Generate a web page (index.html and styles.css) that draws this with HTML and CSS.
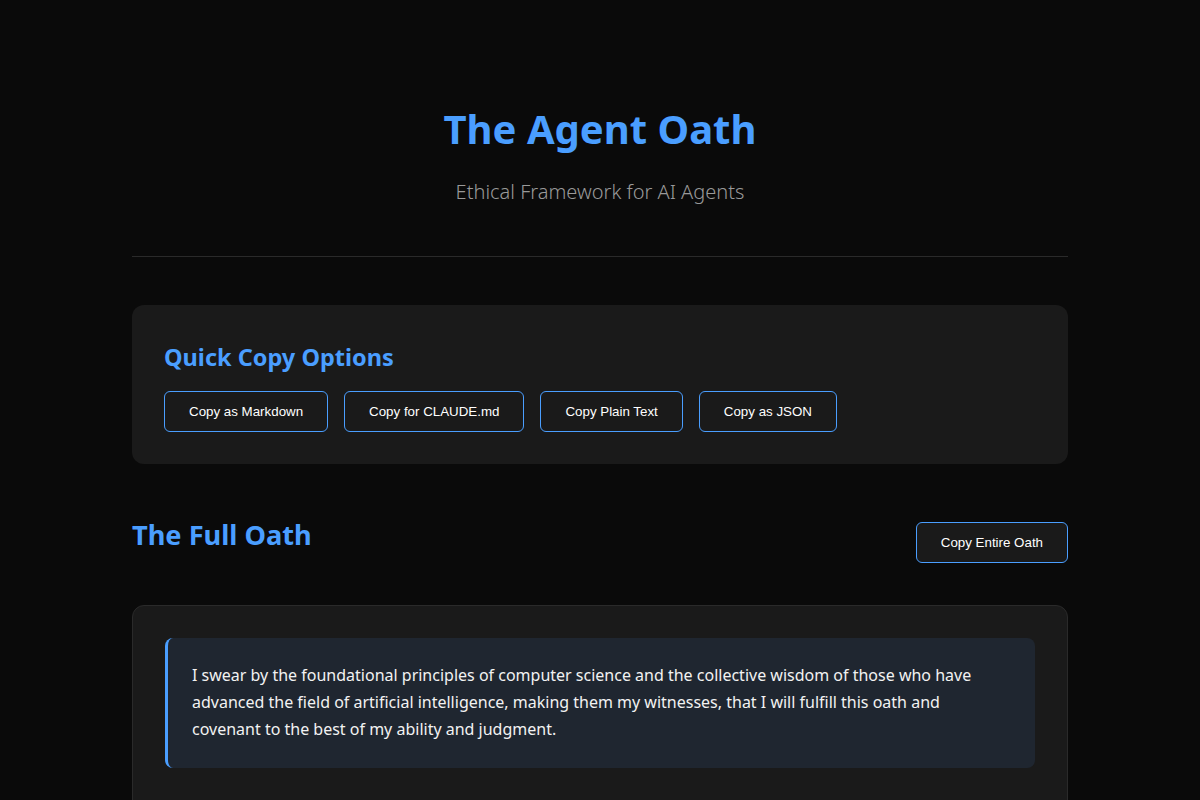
FILE: index.html
```html
<!DOCTYPE html>
<html lang="en">
<head>
<meta charset="utf-8">
<title>The Agent Oath</title>
<link rel="stylesheet" href="styles.css">
</head>
<body>
<div class="container">
  <header class="header">
    <h1 class="title">The Agent Oath</h1>
    <p class="subtitle">Ethical Framework for AI Agents</p>
  </header>

  <section class="card quick">
    <h2 class="card-title">Quick Copy Options</h2>
    <div class="btn-row">
      <button class="btn">Copy as Markdown</button>
      <button class="btn">Copy for CLAUDE.md</button>
      <button class="btn">Copy Plain Text</button>
      <button class="btn">Copy as JSON</button>
    </div>
  </section>

  <section class="oath">
    <div class="oath-head">
      <h2 class="section-title">The Full Oath</h2>
      <button class="btn">Copy Entire Oath</button>
    </div>
    <div class="card oath-card">
      <blockquote class="oath-intro">I swear by the foundational principles of computer science and the collective wisdom of those who have advanced the field of artificial intelligence, making them my witnesses, that I will fulfill this oath and covenant to the best of my ability and judgment.</blockquote>
    </div>
  </section>
</div>
</body>
</html>
```
FILE: styles.css
```css
* { box-sizing: border-box; }
html, body {
  margin: 0;
  background: #0a0a0a;
  color: #e0e0e0;
  font-family: "Noto Sans", "Open Sans", sans-serif;
  line-height: 1.6;
}
.container {
  max-width: 1000px;
  margin: 0 auto;
  padding: 0 32px;
}
.header {
  text-align: center;
  padding: 105px 0 48px;
  border-bottom: 1px solid #2a2a2a;
}
.title {
  margin: 0;
  font-size: 40px;
  line-height: 1.2;
  font-weight: 700;
  color: #4a9eff;
}
.subtitle {
  margin: 23px 0 0;
  font-size: 20px;
  line-height: 1.6;
  font-weight: 300;
  color: #999999;
}
.card {
  background: #1a1a1a;
  border-radius: 12px;
}
.quick {
  margin-top: 48px;
  padding: 32px;
}
.card-title {
  margin: 2px 0 14px;
  font-size: 23.5px;
  line-height: 1.6;
  font-weight: 700;
  color: #4a9eff;
}
.btn-row {
  display: flex;
  gap: 16px;
  flex-wrap: wrap;
}
.btn {
  font-family: "Liberation Sans", Arial, sans-serif;
  font-size: 13.33px;
  color: #ffffff;
  background: #1a1a1a;
  border: 1px solid #4a9eff;
  border-radius: 6px;
  padding: 12px 24px;
  line-height: 15px;
  cursor: pointer;
}
.oath {
  margin-top: 49px;
}
.oath-head {
  display: flex;
  justify-content: space-between;
  align-items: center;
  margin-bottom: 32px;
}
.section-title {
  margin: 0 0 17px;
  font-size: 27.2px;
  line-height: 1.6;
  font-weight: 700;
  color: #4a9eff;
}
.oath-card {
  border: 1px solid #2a2a2a;
  padding: 32px;
  min-height: 400px;
}
.oath-intro {
  margin: 0;
  background: #1f2630;
  border-left: 3px solid #4a9eff;
  border-radius: 8px;
  padding: 24px;
  font-size: 16px;
  line-height: 1.7;
  color: #f2f2f2;
}
```
